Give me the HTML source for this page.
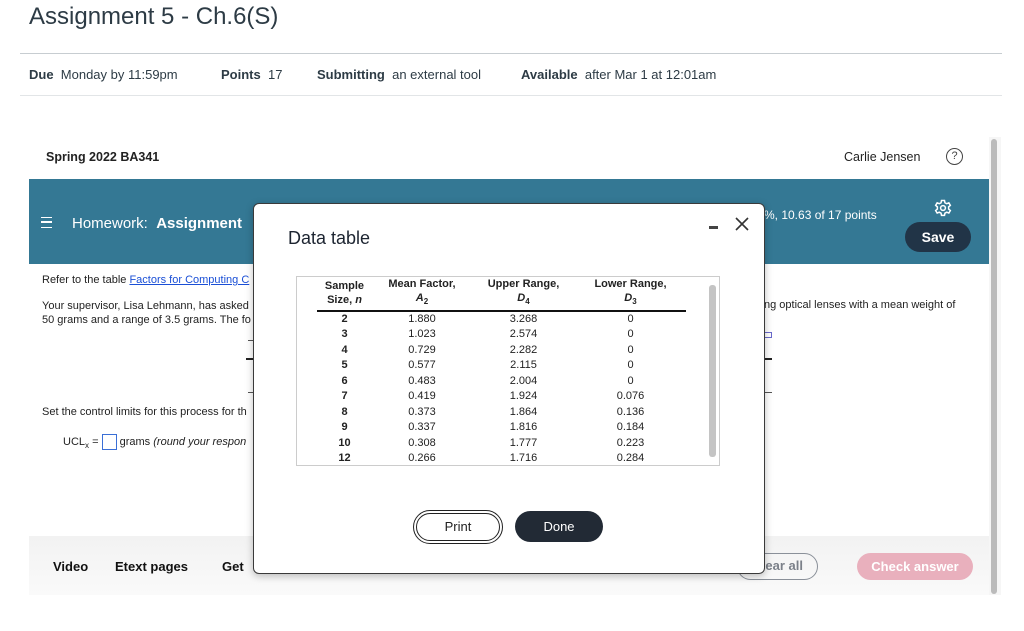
<!DOCTYPE html>
<html><head><meta charset="utf-8"><style>
*{margin:0;padding:0;box-sizing:border-box}
body{width:1024px;height:631px;background:#fff;position:relative;overflow:hidden;font-family:"Liberation Sans",Arial,sans-serif;color:#2d3b45}
.a{position:absolute;white-space:nowrap}
.meta b{font-weight:bold;color:#2d3b45}
.meta{font-size:13px;color:#2d3b45}
.q{font-size:11px;color:#222}
table{border-collapse:collapse}
.dt{position:absolute;left:317px;top:277px;font-size:11px;color:#222}
.dt td{text-align:center;height:15.5px;padding:0}
.dt th{font-size:11px;font-weight:bold;text-align:center;line-height:14px;padding:0 0 1px}
</style></head><body>
<div class="a" style="left:29px;top:3px;font-size:24px;color:#2d3b45">Assignment 5 - Ch.6(S)</div>
<div class="a" style="left:20px;top:53px;width:982px;height:1px;background:#c7cdd1"></div>
<div class="a meta" style="left:29px;top:67px;"><b>Due</b>&nbsp; Monday by 11:59pm</div>
<div class="a meta" style="left:221px;top:67px;"><b>Points</b>&nbsp; 17</div>
<div class="a meta" style="left:317px;top:67px;"><b>Submitting</b>&nbsp; an external tool</div>
<div class="a meta" style="left:521px;top:67px;"><b>Available</b>&nbsp; after Mar 1 at 12:01am</div>
<div class="a" style="left:20px;top:95px;width:982px;height:1px;background:#e2e5e7"></div>

<div class="a" style="left:29px;top:137px;width:960px;height:458px;background:#fff"></div>
<div class="a" style="left:989px;top:137px;width:12px;height:458px;background:#f6f6f6"></div>
<div class="a" style="left:991px;top:139px;width:6px;height:455px;background:#bbb;border-radius:3px"></div>
<div class="a" style="left:46px;top:150px;font-size:12.5px;font-weight:bold;color:#222">Spring 2022 BA341</div>
<div class="a" style="left:844px;top:150px;font-size:12.5px;color:#222">Carlie Jensen</div>
<div class="a" style="left:946px;top:148px;width:17px;height:17px;border:1.3px solid #444;border-radius:50%;font-size:11px;text-align:center;line-height:15px;color:#444">?</div>

<div class="a" style="left:29px;top:179px;width:960px;height:85px;background:#347894"></div>
<div class="a" style="left:41px;top:217px;width:11px;height:11px;border-top:1.5px solid #fff;border-bottom:1.5px solid #fff"><div style="margin-top:3.3px;height:1.5px;background:#fff"></div></div>
<div class="a" style="left:72px;top:215px;font-size:15px;color:#fff">Homework:&nbsp; <b>Assignment</b></div>
<div class="a" style="left:764px;top:208px;font-size:12px;color:#fff">%, 10.63 of 17 points</div>
<svg class="a" style="left:934px;top:199px" width="18" height="18" viewBox="0 0 24 24" fill="none" stroke="#fff" stroke-width="2"><circle cx="12" cy="12" r="3.2"/><path d="M10 2h4l.6 3 2.4 1.3 2.8-1.2 2 3.4-2.3 2v2.9l2.3 2-2 3.4-2.8-1.2-2.4 1.3-.6 3h-4l-.6-3-2.4-1.3-2.8 1.2-2-3.4 2.3-2v-2.9l-2.3-2 2-3.4 2.8 1.2 2.4-1.3z"/></svg>
<div class="a" style="left:905px;top:222px;width:66px;height:30px;background:#213447;border-radius:15px;color:#fff;font-weight:bold;font-size:14px;text-align:center;line-height:30px">Save</div>

<div class="a q" style="left:42px;top:274px">Refer to the table <span style="color:#1a4fd6;text-decoration:underline">Factors for Computing C</span></div>
<div class="a q" style="left:42px;top:299px;line-height:14px">Your supervisor, Lisa Lehmann, has asked<br>50 grams and a range of 3.5 grams. The fo</div>
<div class="a q" style="left:764px;top:299px">ng optical lenses with a mean weight of</div>
<div class="a" style="left:764px;top:332px;width:8px;height:6px;border:1px solid #6a6acc"></div>
<div class="a" style="left:248px;top:340px;width:6px;height:1px;background:#555"></div>
<div class="a" style="left:246px;top:358px;width:8px;height:2px;background:#222"></div>
<div class="a" style="left:248px;top:392px;width:6px;height:1px;background:#555"></div>
<div class="a" style="left:764px;top:358px;width:8px;height:2px;background:#222"></div>
<div class="a" style="left:764px;top:392px;width:8px;height:1px;background:#555"></div>
<div class="a q" style="left:42px;top:406px">Set the control limits for this process for th</div>
<div class="a q" style="left:63px;top:434px">UCL<sub style="font-size:8px">x</sub> = <span style="display:inline-block;width:15px;height:16px;border:1px solid #3a6fd6;vertical-align:middle"></span> grams <i>(round your respon</i></div>

<div class="a" style="left:29px;top:536px;width:960px;height:59px;background:linear-gradient(#f2f2f2,#fafafa)"></div>
<div class="a" style="left:53px;top:559px;font-size:13px;font-weight:bold;color:#111">Video</div>
<div class="a" style="left:115px;top:559px;font-size:13px;font-weight:bold;color:#111">Etext pages</div>
<div class="a" style="left:222px;top:559px;font-size:13px;font-weight:bold;color:#111">Get</div>
<div class="a" style="left:737px;top:553px;width:81px;height:27px;border:1.5px solid #8a9099;border-radius:14px;font-size:13px;font-weight:bold;color:#7b8089;line-height:24px;text-align:right;padding-right:14px">ear all</div>
<div class="a" style="left:857px;top:553px;width:116px;height:27px;background:#e9b0bd;border-radius:14px;font-size:13px;font-weight:bold;color:#fff;line-height:27px;text-align:center">Check answer</div>

<div class="a" style="left:253px;top:203px;width:512px;height:371px;background:#fff;border:1.5px solid #3a3a3a;border-radius:6px;box-shadow:0 2px 8px rgba(0,0,0,.25)"></div>
<div class="a" style="left:288px;top:228px;font-size:18px;color:#1c2430">Data table</div>
<div class="a" style="left:709px;top:226px;width:9px;height:3px;background:#444"></div>
<svg class="a" style="left:735px;top:217px" width="14" height="14" viewBox="0 0 14 14"><path d="M1 1L13 13M13 1L1 13" stroke="#333" stroke-width="1.6"/></svg>
<div class="a" style="left:296px;top:276px;width:424px;height:190px;border:1px solid #ccc"></div>
<div class="a" style="left:709px;top:285px;width:7px;height:172px;background:#c4c4c4;border-radius:3px"></div>
<table class="dt">
<tr style="border-bottom:2px solid #111"><th style="width:55px">Sample<br>Size, <i>n</i></th><th style="width:100px">Mean Factor,<br><i>A</i><sub style="font-size:8px">2</sub></th><th style="width:103px">Upper Range,<br><i>D</i><sub style="font-size:8px">4</sub></th><th style="width:111px">Lower Range,<br><i>D</i><sub style="font-size:8px">3</sub></th></tr>
<tr><td><b>2</b></td><td>1.880</td><td>3.268</td><td>0</td></tr>
<tr><td><b>3</b></td><td>1.023</td><td>2.574</td><td>0</td></tr>
<tr><td><b>4</b></td><td>0.729</td><td>2.282</td><td>0</td></tr>
<tr><td><b>5</b></td><td>0.577</td><td>2.115</td><td>0</td></tr>
<tr><td><b>6</b></td><td>0.483</td><td>2.004</td><td>0</td></tr>
<tr><td><b>7</b></td><td>0.419</td><td>1.924</td><td>0.076</td></tr>
<tr><td><b>8</b></td><td>0.373</td><td>1.864</td><td>0.136</td></tr>
<tr><td><b>9</b></td><td>0.337</td><td>1.816</td><td>0.184</td></tr>
<tr><td><b>10</b></td><td>0.308</td><td>1.777</td><td>0.223</td></tr>
<tr><td><b>12</b></td><td>0.266</td><td>1.716</td><td>0.284</td></tr>
</table>
<div class="a" style="left:413px;top:510px;width:90px;height:34px;border:4px double #222;border-radius:17px;font-size:13px;color:#222;text-align:center;line-height:26px">Print</div>
<div class="a" style="left:515px;top:511px;width:88px;height:31px;background:#222a35;border-radius:16px;font-size:13px;color:#fff;text-align:center;line-height:31px">Done</div>
</body></html>
